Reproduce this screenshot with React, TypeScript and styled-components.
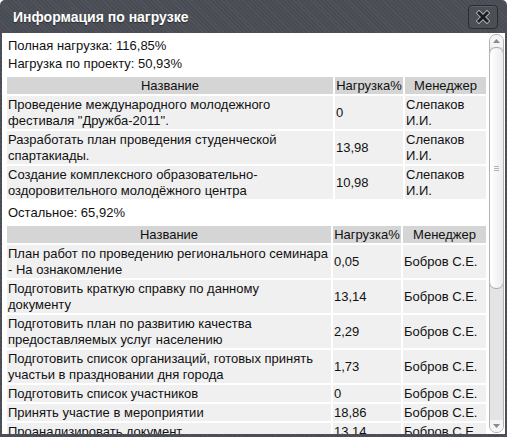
import React from "react";
import styled, { createGlobalStyle } from "styled-components";

const GlobalStyle = createGlobalStyle`
  html, body {
    margin: 0;
    padding: 0;
    background: #ffffff;
  }
  body {
    font-family: "Liberation Sans", Arial, sans-serif;
  }
`;

const Dialog = styled.div`
  box-sizing: border-box;
  width: 507px;
  height: 437px;
  display: flex;
  flex-direction: column;
  padding: 0 2px 3px 2px;
  border-radius: 5px 5px 0 0;
  background: repeating-linear-gradient(
    45deg,
    #51545c 0,
    #51545c 1px,
    #494c53 1px,
    #494c53 3px
  );
  overflow: hidden;
`;

const TitleBar = styled.div`
  height: 33px;
  flex: none;
  display: flex;
  align-items: center;
  justify-content: space-between;
  padding: 0 7px 0 11px;
`;

const Title = styled.span`
  color: #ffffff;
  font-size: 14px;
  font-weight: bold;
  text-shadow: 0 1px 1px rgba(0, 0, 0, 0.45);
`;

const CloseButton = styled.button`
  box-sizing: border-box;
  width: 30px;
  height: 24px;
  padding: 0;
  display: flex;
  align-items: center;
  justify-content: center;
  border: 1px solid #2a2c30;
  border-radius: 4px;
  background: #4c4f56;
  box-shadow: inset 0 1px 0 rgba(255, 255, 255, 0.1);
  cursor: pointer;
`;

const Body = styled.div`
  flex: 1;
  min-height: 0;
  display: flex;
  background: #ffffff;
`;

const Content = styled.div`
  width: 486px;
  flex: none;
  padding: 4px 0 0 3px;
  box-sizing: border-box;
  overflow: hidden;
  font-size: 13px;
  color: #111111;
`;

const Line = styled.div`
  line-height: 18px;
  padding-left: 3px;
`;

const Table = styled.table`
  width: 483px;
  margin-top: 2px;
  border-collapse: separate;
  border-spacing: 2px;
  table-layout: fixed;
  font-size: 13px;
  line-height: 16px;

  & + ${Line} {
    margin-top: 3px;
  }
`;

const Col = styled.col<{ $w: number }>`
  width: ${({ $w }) => $w}px;
`;

const Th = styled.th`
  background: #d5d5d5;
  font-weight: normal;
  text-align: center;
  padding: 1px 0 0;
  color: #111111;
  white-space: nowrap;
`;

const Td = styled.td`
  background: #f0f0f0;
  padding: 1px 1px 0;
  vertical-align: middle;
  color: #111111;
  white-space: pre-line;
`;

const Scrollbar = styled.div`
  width: 15px;
  flex: none;
  margin: 1px;
  box-sizing: border-box;
  display: flex;
  flex-direction: column;
  border: 1px solid #b3b3b3;
  border-radius: 7px;
  background: #e4e4e4;
  overflow: hidden;
`;

const Arrow = styled.div`
  height: 12px;
  flex: none;
  display: flex;
  align-items: center;
  justify-content: center;
  background: #f4f4f4;
`;

const Thumb = styled.div`
  height: 242px;
  flex: none;
  box-sizing: border-box;
  margin: 0 -1px;
  border: 1px solid #a9a9a9;
  border-radius: 7px;
  background: linear-gradient(to right, #ffffff, #ececec);
  display: flex;
  align-items: center;
  justify-content: center;
`;

const Grip = styled.div`
  width: 5px;
  height: 5px;
  background: repeating-linear-gradient(
    to bottom,
    #b5b5b5 0,
    #b5b5b5 1px,
    transparent 1px,
    transparent 2px
  );
`;

const Track = styled.div`
  flex: 1;
`;

const TriangleUp = () => (
  <svg width="7" height="4" viewBox="0 0 7 4">
    <path d="M0 4 L3.5 0 L7 4 Z" fill="#8a8a8a" />
  </svg>
);

const TriangleDown = () => (
  <svg width="7" height="4" viewBox="0 0 7 4">
    <path d="M0 0 L3.5 4 L7 0 Z" fill="#8a8a8a" />
  </svg>
);

const CloseIcon = () => (
  <svg width="14" height="14" viewBox="0 0 14 14">
    <path d="M3 3 L11 11 M11 3 L3 11" stroke="#b9b9b9" strokeWidth="4.6" strokeLinecap="square" />
    <path d="M3 3 L11 11 M11 3 L3 11" stroke="#1c1d20" strokeWidth="3" strokeLinecap="square" />
  </svg>
);

type Row = { name: string; load: string; manager: string };

const projectRows: Row[] = [
  { name: "Проведение международного молодежного фестиваля \"Дружба-2011\".", load: "0", manager: "Слепаков И.И." },
  { name: "Разработать план проведения студенческой спартакиады.", load: "13,98", manager: "Слепаков И.И." },
  { name: "Создание комплексного образовательно-оздоровительного молодёжного центра", load: "10,98", manager: "Слепаков И.И." },
];

const otherRows: Row[] = [
  { name: "План работ по проведению регионального семинара - На ознакомление", load: "0,05", manager: "Бобров С.Е." },
  { name: "Подготовить краткую справку по данному\nдокументу", load: "13,14", manager: "Бобров С.Е." },
  { name: "Подготовить план по развитию качества предоставляемых услуг населению", load: "2,29", manager: "Бобров С.Е." },
  { name: "Подготовить список организаций, готовых принять участьи в праздновании дня города", load: "1,73", manager: "Бобров С.Е." },
  { name: "Подготовить список участников", load: "0", manager: "Бобров С.Е." },
  { name: "Принять участие в мероприятии", load: "18,86", manager: "Бобров С.Е." },
  { name: "Проанализировать документ", load: "13,14", manager: "Бобров С.Е." },
  { name: "Проанализировать документ", load: "2,10", manager: "Бобров С.Е." },
];

const LoadTable: React.FC<{ rows: Row[]; widths: [number, number, number] }> = ({ rows, widths }) => (
  <Table>
    <colgroup>
      {widths.map((w, i) => (
        <Col key={i} $w={w} />
      ))}
    </colgroup>
    <thead>
      <tr>
        <Th>Название</Th>
        <Th>Нагрузка%</Th>
        <Th>Менеджер</Th>
      </tr>
    </thead>
    <tbody>
      {rows.map((r, i) => (
        <tr key={i}>
          <Td>{r.name}</Td>
          <Td>{r.load}</Td>
          <Td>{r.manager}</Td>
        </tr>
      ))}
    </tbody>
  </Table>
);

const App: React.FC = () => (
  <>
    <GlobalStyle />
    <Dialog>
      <TitleBar>
        <Title>Информация по нагрузке</Title>
        <CloseButton aria-label="Закрыть">
          <CloseIcon />
        </CloseButton>
      </TitleBar>
      <Body>
        <Content>
          <Line>Полная нагрузка: 116,85%</Line>
          <Line>Нагрузка по проекту: 50,93%</Line>
          <LoadTable rows={projectRows} widths={[326, 68, 81]} />
          <Line>Остальное: 65,92%</Line>
          <LoadTable rows={otherRows} widths={[324, 68, 83]} />
        </Content>
        <Scrollbar>
          <Arrow>
            <TriangleUp />
          </Arrow>
          <Thumb>
            <Grip />
          </Thumb>
          <Track />
          <Arrow>
            <TriangleDown />
          </Arrow>
        </Scrollbar>
      </Body>
    </Dialog>
  </>
);

export default App;
